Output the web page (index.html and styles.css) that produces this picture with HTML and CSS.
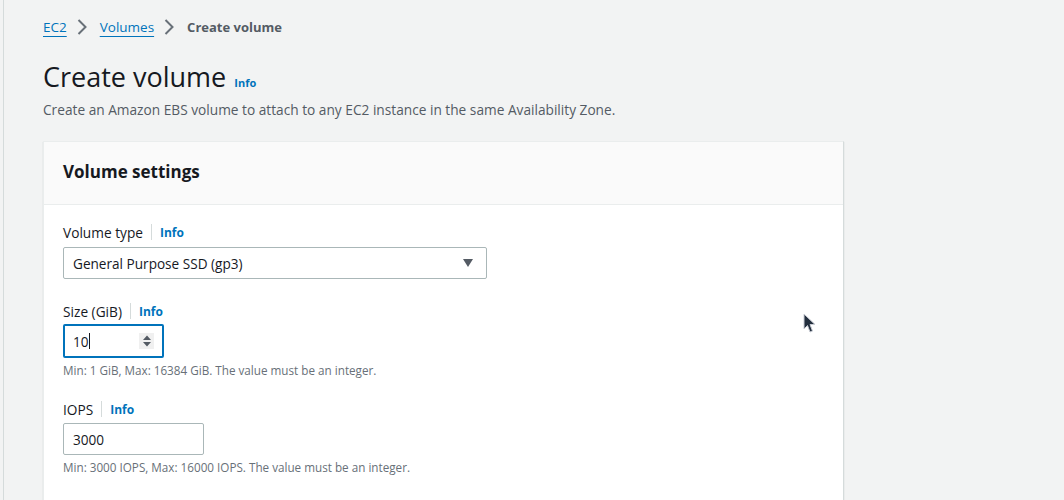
FILE: index.html
```html
<!DOCTYPE html>
<html>
<head>
<meta charset="utf-8">
<link rel="stylesheet" href="styles.css">
</head>
<body>
<div class="page">
  <main class="main">
    <nav class="crumbs">
      <a class="crumb-link">EC2</a>
      <svg class="chev" width="16" height="16" viewBox="0 0 16 16"><path d="M4.5 1 L11.5 8 L4.5 15" fill="none" stroke="#687078" stroke-width="2"/></svg>
      <a class="crumb-link">Volumes</a>
      <svg class="chev" width="16" height="16" viewBox="0 0 16 16"><path d="M4.5 1 L11.5 8 L4.5 15" fill="none" stroke="#687078" stroke-width="2"/></svg>
      <span class="crumb-current">Create volume</span>
    </nav>
    <div class="title-row">
      <h1 class="title">Create volume</h1>
      <a class="info">Info</a>
    </div>
    <p class="desc">Create an Amazon EBS volume to attach to any EC2 instance in the same Availability Zone.</p>

    <section class="card">
      <header class="card-head">
        <h2 class="card-title">Volume settings</h2>
      </header>
      <div class="card-body">
        <div class="field">
          <div class="label-row"><span class="label">Volume type</span><span class="sep"></span><a class="info small">Info</a></div>
          <div class="select">
            <span>General Purpose SSD (gp3)</span>
            <svg width="12" height="10" viewBox="0 0 12 10"><path d="M1 1 H11 L6 9 Z" fill="#545b64"/></svg>
          </div>
        </div>
        <div class="field">
          <div class="label-row"><span class="label">Size (GiB)</span><span class="sep"></span><a class="info small">Info</a></div>
          <div class="input focused">
            <span class="val">10<span class="caret"></span></span>
            <span class="spin"><svg width="10" height="14" viewBox="0 0 10 14"><path d="M1 6 L5 1.5 L9 6 Z M1 8 L5 12.5 L9 8 Z" fill="#545b64"/></svg></span>
          </div>
          <div class="hint">Min: 1 GiB, Max: 16384 GiB. The value must be an integer.</div>
        </div>
        <div class="field">
          <div class="label-row"><span class="label">IOPS</span><span class="sep"></span><a class="info small">Info</a></div>
          <div class="input iops"><span class="val">3000</span></div>
          <div class="hint">Min: 3000 IOPS, Max: 16000 IOPS. The value must be an integer.</div>
        </div>
      </div>
    </section>
  </main>
  <svg class="cursor" width="14" height="22" viewBox="0 0 14 22"><path d="M1 1 L1 16 L4.5 12.5 L7 19 L9.5 18 L7 11.5 L12 11.5 Z" fill="#232f3e" stroke="#c9ccd4" stroke-width="1"/></svg>
</div>
</body>
</html>
```
FILE: styles.css
```css
* { box-sizing: border-box; }
html, body { margin: 0; padding: 0; }
body {
  background: #f2f3f3;
  font-family: "Open Sans", "Noto Sans", sans-serif;
  color: #16191f;
  width: 1064px;
  height: 500px;
  overflow: hidden;
}
.page {
  position: relative;
  height: 500px;
  overflow: hidden;
  border-left: 1px solid #d5dbdb;
  margin-left: 3px;
}
.main {
  padding: 16px 0 0 39px;
}
.crumbs {
  display: flex;
  align-items: center;
  height: 22px;
  font-size: 13.5px;
}
.chev { display: block; margin: 0 10px 0 7px; }
.crumb-link {
  color: #0073bb;
  text-decoration: underline;
  text-underline-offset: 4px;
}
.crumb-current {
  color: #545b64;
  font-weight: 700;
  font-size: 13px;
}
.title-row {
  display: flex;
  align-items: baseline;
  gap: 8px;
  margin-top: 21px;
}
.title {
  margin: 0;
  font-size: 27px;
  font-weight: 400;
  line-height: 36px;
  color: #16191f;
}
.info {
  color: #0073bb;
  font-weight: 700;
  font-size: 11px;
}
.desc {
  margin: 5px 0 0;
  font-size: 13.7px;
  line-height: 20px;
  color: #545b64;
}
.card {
  margin-top: 21px;
  width: 801px;
  height: 359px;
  background: #fff;
  border-left: 1px solid #eaeded;
  border-right: 1px solid #d5dbdb;
  border-top: 1px solid #eaeded;
  box-shadow: 0 1px 1px rgba(0,28,36,0.2);
}
.card-head {
  background: #fafafa;
  height: 63px;
  border-bottom: 1px solid #eaeded;
  padding: 18px 19px 0;
}
.card-title {
  margin: 0;
  font-size: 17px;
  font-weight: 700;
  line-height: 24px;
  color: #16191f;
}
.card-body {
  padding: 17px 19px 20px;
  display: flex;
  flex-direction: column;
  gap: 22px;
}
.field { display: flex; flex-direction: column; }
.field + .field + .field { margin-top: -1px; }
.label-row {
  display: flex;
  align-items: center;
  height: 20px;
  font-size: 13.7px;
  color: #16191f;
  margin-bottom: 4px;
}
.sep {
  width: 1px;
  height: 16px;
  background: #d5dbdb;
  margin: 0 8px;
}
.info.small { font-size: 12px; }
.select {
  width: 424px;
  height: 32px;
  margin-top: 1px;
  border: 1px solid #aab7b8;
  border-radius: 2px;
  display: flex;
  align-items: center;
  justify-content: space-between;
  padding: 0 12px 0 9px;
  font-size: 13.6px;
  color: #16191f;
}
.select svg { display: block; }
.input {
  height: 32px;
  border: 1px solid #aab7b8;
  border-radius: 2px;
  display: flex;
  align-items: center;
  justify-content: space-between;
  padding: 0 8px 0 9px;
  font-size: 13.6px;
  color: #16191f;
}
.input.focused {
  width: 101px;
  height: 34px;
  margin-top: -1px;
  border: 2px solid #0073bb;
  padding: 0 8px 0 8px;
}
.input.iops { width: 141px; }
.val { display: flex; align-items: center; }
.caret {
  display: inline-block;
  width: 1px;
  height: 16px;
  background: #16191f;
}
.spin {
  width: 15px;
  height: 16px;
  background: #f0f0f0;
  display: flex;
  align-items: center;
  justify-content: center;
}
.spin svg { display: block; }
.hint {
  margin-top: 4px;
  font-size: 11.7px;
  line-height: 16px;
  color: #687078;
}
.cursor {
  position: absolute;
  left: 799px;
  top: 313px;
}
```
